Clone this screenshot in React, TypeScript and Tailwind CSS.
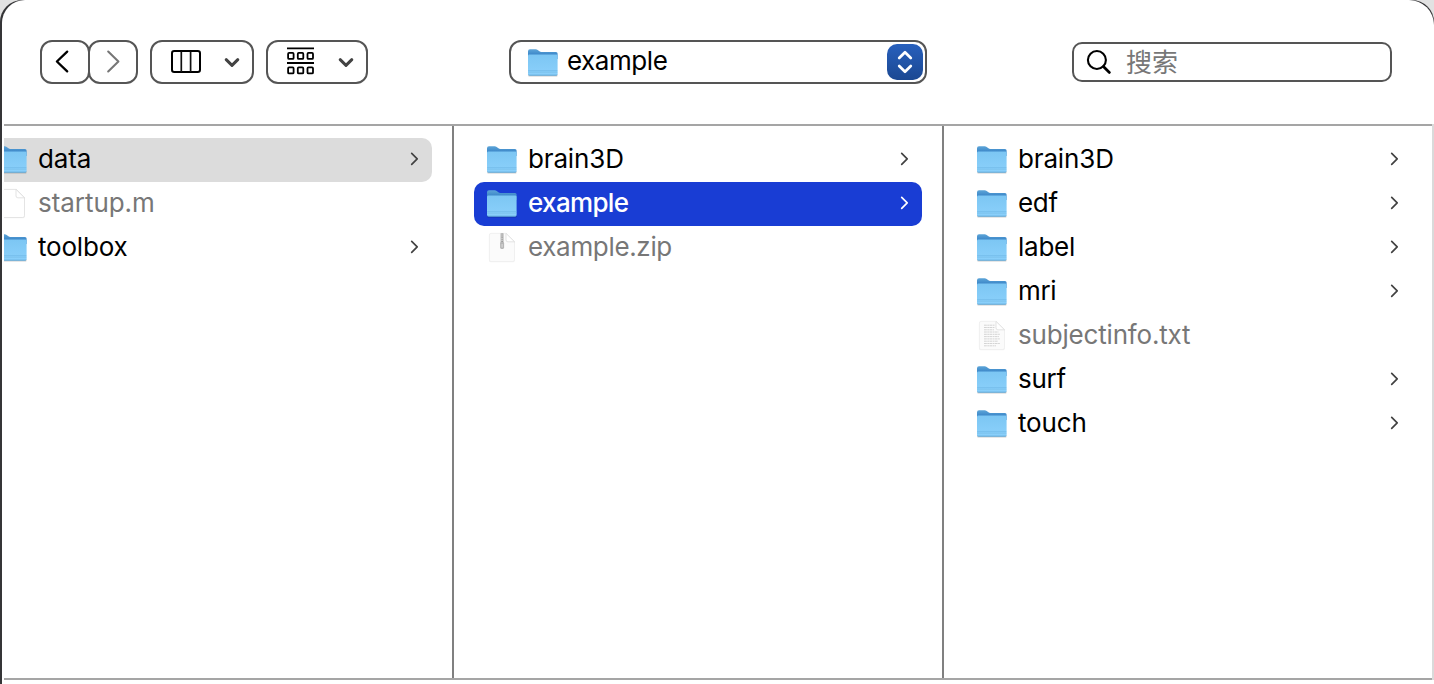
import type { ReactNode } from 'react';

type Kind = 'folder' | 'blank' | 'zip' | 'text';

interface Entry {
  name: string;
  kind: Kind;
  spacing: string;
  state?: 'active' | 'path';
}

const columns: Entry[][] = [
  [
    { name: 'data', kind: 'folder', spacing: 'tracking-[-0.1px]', state: 'path' },
    { name: 'startup.m', kind: 'blank', spacing: 'tracking-[-0.05px]' },
    { name: 'toolbox', kind: 'folder', spacing: 'tracking-[-0.2px]' },
  ],
  [
    { name: 'brain3D', kind: 'folder', spacing: 'tracking-[-0.15px]' },
    { name: 'example', kind: 'folder', spacing: 'tracking-[-0.65px]', state: 'active' },
    { name: 'example.zip', kind: 'zip', spacing: 'tracking-[-0.33px]' },
  ],
  [
    { name: 'brain3D', kind: 'folder', spacing: 'tracking-[-0.15px]' },
    { name: 'edf', kind: 'folder', spacing: 'tracking-[-0.3px]' },
    { name: 'label', kind: 'folder', spacing: 'tracking-[-0.25px]' },
    { name: 'mri', kind: 'folder', spacing: 'tracking-[-0.3px]' },
    { name: 'subjectinfo.txt', kind: 'text', spacing: 'tracking-[-0.18px]' },
    { name: 'surf', kind: 'folder', spacing: 'tracking-[-0.25px]' },
    { name: 'touch', kind: 'folder', spacing: 'tracking-[-0.15px]' },
  ],
];

function Folder() {
  return (
    <svg width="32" height="32" viewBox="0 0 32 32" className="shrink-0">
      <defs>
        <linearGradient id="front" x1="0" y1="0" x2="0" y2="1">
          <stop offset="0" stopColor="#7cc6f3" />
          <stop offset="1" stopColor="#8bd0fb" />
        </linearGradient>
        <linearGradient id="back" x1="0" y1="0" x2="0" y2="1">
          <stop offset="0" stopColor="#5da5d8" />
          <stop offset="0.65" stopColor="#3782c6" />
        </linearGradient>
      </defs>
      <rect x="1.3" y="27" width="29.2" height="2.6" rx="1.2" fill="#000" opacity="0.2" />
      <path d="M1 4.2Q1 2.2 3 2.2H8.6Q9.8 2.2 10.7 3L12.4 4.3Q13.2 5 14.4 5H29Q30.6 5 30.6 6.6V12H1Z" fill="url(#back)" />
      <path d="M1 8.7Q1 7.5 2.2 7.5H29.4Q30.6 7.5 30.6 8.7V26.8Q30.6 28.4 29 28.4H2.6Q1 28.4 1 26.8Z" fill="url(#front)" />
      <path d="M1.2 23.8H30.4" stroke="#6bb4e3" strokeWidth="0.7" />
      <path d="M1.2 25.5H30.4" stroke="#78bee9" strokeWidth="0.5" />
      <path d="M1.3 27.6Q1.6 28.2 2.6 28.2H29Q30 28.2 30.3 27.6" fill="none" stroke="#549fd0" strokeWidth="0.8" />
    </svg>
  );
}

function Sheet({ kind }: { kind: Kind }) {
  return (
    <svg width="32" height="32" viewBox="0 0 32 32" className="shrink-0">
      <path d="M3 3.2Q3 1.5 4.7 1.5H20.6L28.8 9.8V28.4Q28.8 30.3 27 30.3H4.8Q3 30.3 3 28.4Z" fill="#000" opacity="0.05" />
      <path
        d="M3.4 3.2Q3.4 1.4 5 1.4H20.4L28.5 9.6V27.8Q28.5 29.5 26.8 29.5H5Q3.4 29.5 3.4 27.8Z"
        fill={kind === 'blank' ? '#fff' : '#fbfbfb'}
        stroke={kind === 'blank' ? '#dedede' : '#eeeeee'}
        strokeWidth="0.8"
      />
      <path d="M20 1.4V7.9Q20 9.8 21.9 9.8H28.5Z" fill="#fff" stroke="#dcdcdc" strokeWidth="0.8" />
      {kind === 'zip' && (
        <g>
          <rect x="14.2" y="1.2" width="3.8" height="11" fill="#d2d2d2" />
          <path d="M16.1 1.5V11" stroke="#929292" strokeWidth="1.5" strokeDasharray="1 0.9" />
          <rect x="14.1" y="10" width="4" height="7" rx="1.4" fill="#b6b6b6" />
          <path d="M16.1 12V15.4" stroke="#dedede" strokeWidth="1" />
        </g>
      )}
      {kind === 'text' && (
        <g stroke="#d4d4d4" strokeWidth="1">
          <path
            d="M8 5.2H19M8 7.5H18.5M8 9.8H18M8 12H22.5M8 14.3H24M8 16.6H23M8 18.9H24M8 21.2H22M8 23.5H24M8 25.8H20"
            strokeDasharray="2.8 0.5 1.7 0.4"
          />
        </g>
      )}
    </svg>
  );
}

function Row({ entry }: { entry: Entry }) {
  const tone =
    entry.state === 'active'
      ? 'bg-[#193dd4] text-white'
      : entry.state === 'path'
        ? 'bg-[#dcdcdc] text-black'
        : entry.kind === 'folder'
          ? 'text-black'
          : 'text-[#777777]';
  return (
    <li className={`flex h-11 items-center rounded-[10px] pl-3 pr-3 ${tone}`}>
      {entry.kind === 'folder' ? <Folder /> : <Sheet kind={entry.kind} />}
      <span
        className={`ml-2.5 flex-1 whitespace-nowrap pb-0.5 text-[26px] leading-[42px] ${entry.spacing} ${entry.state === 'active' ? 'font-medium' : ''}`}
      >
        {entry.name}
      </span>
      {entry.kind === 'folder' && (
        <svg width="12" height="16" viewBox="0 0 12 16" className="mb-0.5 shrink-0">
          <path
            d="M3.7 2.4L9.2 7.9L3.7 13.4"
            fill="none"
            stroke={entry.state === 'active' ? '#fff' : '#424242'}
            strokeWidth="1.7"
            strokeLinecap="round"
            strokeLinejoin="round"
          />
        </svg>
      )}
    </li>
  );
}

function Button({ className, children }: { className: string; children: ReactNode }) {
  return (
    <button className={`flex h-11 shrink-0 items-center rounded-xl border-2 border-[#555555] bg-white ${className}`}>
      {children}
    </button>
  );
}

function Caret() {
  return (
    <svg width="18" height="12" viewBox="0 0 18 12" className="shrink-0">
      <path d="M3.2 3.7L9 9.3L14.8 3.7" fill="none" stroke="#434343" strokeWidth="3" strokeLinecap="round" strokeLinejoin="round" />
    </svg>
  );
}

function Toolbar() {
  return (
    <header className="flex h-[124px] items-start pl-[38px] pt-10">
      <Button className="w-[50px] pl-3">
        <svg width="20" height="26" viewBox="0 0 20 26">
          <path d="M13.2 2.6L2.9 12.5L13.2 22.4" fill="none" stroke="#000" strokeWidth="2.3" strokeLinecap="round" strokeLinejoin="round" />
        </svg>
      </Button>
      <Button className="-ml-0.5 w-[50px] pl-[15px]">
        <svg width="20" height="26" viewBox="0 0 20 26">
          <path d="M3.2 2.6L13.4 12.5L3.2 22.4" fill="none" stroke="#777" strokeWidth="2.1" strokeLinecap="round" strokeLinejoin="round" />
        </svg>
      </Button>
      <Button className="ml-3 w-[104px] justify-between pl-[18px] pr-[11px]">
        <svg width="32" height="26" viewBox="0 0 32 26" fill="none">
          <rect x="2" y="2" width="28" height="21" rx="2.2" stroke="#000" strokeWidth="2" />
          <path d="M11.3 2.5V23M20.6 2.5V23" stroke="#111" strokeWidth="1.7" />
        </svg>
        <Caret />
      </Button>
      <Button className="ml-3 w-[102px] justify-between pl-[18px] pr-[11px]">
        <svg width="30" height="30" viewBox="0 0 30 30" fill="none" stroke="#000">
          <path d="M1 1.4H28M1 16H28" strokeWidth="1.8" />
          <g strokeWidth="1.8">
            <rect x="2.1" y="5.9" width="5.5" height="6" rx="1" />
            <rect x="11.8" y="5.9" width="5.5" height="6" rx="1" />
            <rect x="21.5" y="5.9" width="5.5" height="6" rx="1" />
            <rect x="2.1" y="20.4" width="5.5" height="6" rx="1" />
            <rect x="11.8" y="20.4" width="5.5" height="6" rx="1" />
            <rect x="21.5" y="20.4" width="5.5" height="6" rx="1" />
          </g>
        </svg>
        <Caret />
      </Button>
      <Button className="ml-[141px] w-[418px] pl-4 pr-0.5">
        <span className="pt-0.5">
          <Folder />
        </span>
        <span className="ml-2 flex-1 pb-0.5 text-left text-[26px] leading-[38px] tracking-[-0.45px]">example</span>
        <span className="flex size-9 shrink-0 items-center justify-center rounded-[10px] bg-gradient-to-b from-[#2860bd] to-[#1b4892]">
          <svg width="20" height="28" viewBox="0 0 20 28">
            <path d="M4.2 10L10 4.2L15.8 10M4.2 18L10 23.8L15.8 18" fill="none" stroke="#fff" strokeWidth="2.7" strokeLinecap="round" strokeLinejoin="round" />
          </svg>
        </span>
      </Button>
      <label className="ml-[145px] mt-0.5 flex h-10 w-80 items-center rounded-[10px] border-2 border-[#555555] pl-3">
        <svg width="28" height="28" viewBox="0 0 28 28" className="shrink-0">
          <circle cx="10.9" cy="12" r="9" fill="none" stroke="#000" strokeWidth="2.1" />
          <path d="M17.4 18.6L23.4 24.4" stroke="#000" strokeWidth="2.8" strokeLinecap="round" />
        </svg>
        <span className="ml-3 pt-0.5 text-[26px] leading-9 text-[#777777]">搜索</span>
      </label>
    </header>
  );
}

export default function App() {
  return (
    <div className="h-[684px] w-[1434px] overflow-hidden bg-[#e2e2e2] font-['Inter','Noto_Sans_CJK_SC',sans-serif]">
      <div className="flex h-[708px] w-[1434px] flex-col overflow-hidden rounded-t-[22px] bg-[#353537] pl-0.5">
        <div className="flex h-[684px] flex-col overflow-hidden rounded-tl-[23px] rounded-tr-[25px] bg-white">
          <Toolbar />
          <main className="flex h-[556px] border-r-2 border-[#dadada] pl-0.5">
            <div className="flex flex-1 border-y-2 border-[#a5a5a5]">
              {columns.map((entries, i) => (
                <ul
                  key={i}
                  className={
                    i === 0
                      ? 'w-[450px] shrink-0 overflow-hidden border-r-2 border-[#808080] pr-5 pt-3'
                      : i === 1
                        ? 'w-[490px] shrink-0 border-r-2 border-[#808080] px-5 pt-3'
                        : 'flex-1 px-5 pt-3'
                  }
                >
                  {i === 0 ? (
                    <div className="-ml-5">
                      {entries.map((entry) => (
                        <Row key={entry.name} entry={entry} />
                      ))}
                    </div>
                  ) : (
                    entries.map((entry) => <Row key={entry.name} entry={entry} />)
                  )}
                </ul>
              ))}
            </div>
          </main>
        </div>
      </div>
    </div>
  );
}
